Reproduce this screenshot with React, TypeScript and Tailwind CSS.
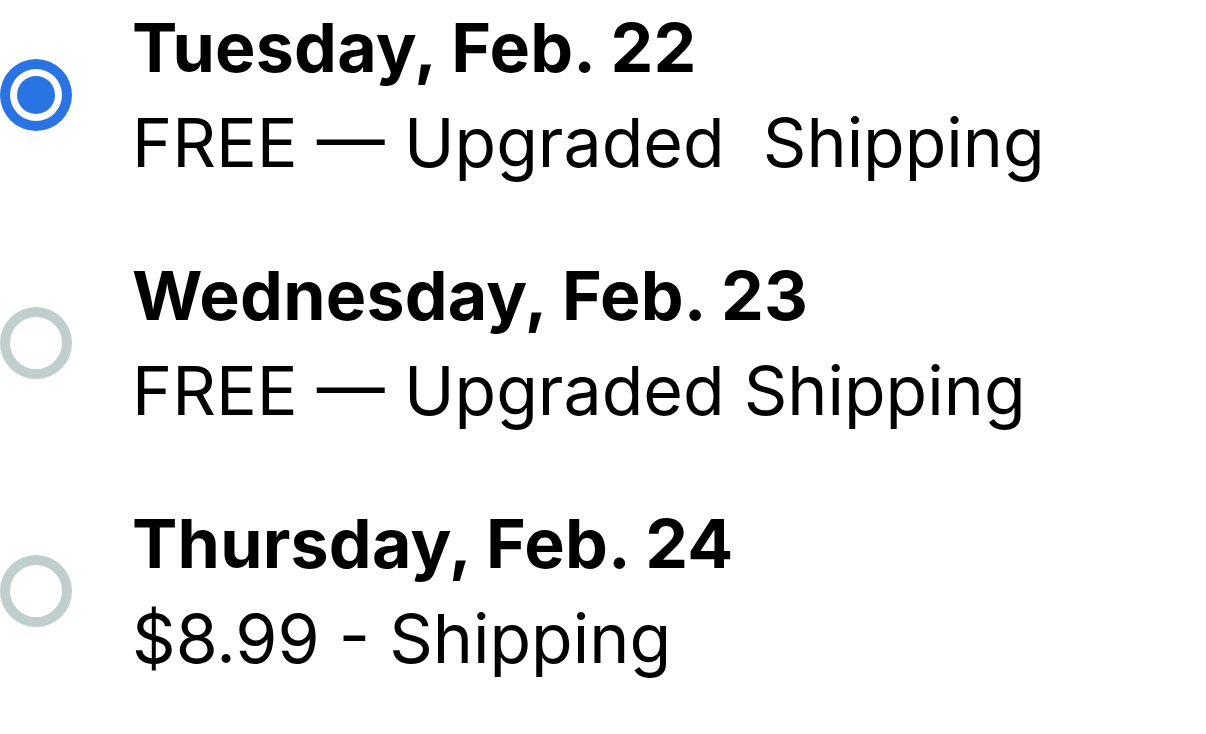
import React, { useState } from 'react';

type Option = {
  id: string;
  day: string;
  price: string;
};

const options: Option[] = [
  { id: 'tue', day: 'Tuesday, Feb. 22', price: 'FREE — Upgraded\u00a0 Shipping' },
  { id: 'wed', day: 'Wednesday, Feb. 23', price: 'FREE — Upgraded Shipping' },
  { id: 'thu', day: 'Thursday, Feb. 24', price: '$8.99 - Shipping' },
];

const App: React.FC = () => {
  const [selected, setSelected] = useState('tue');

  return (
    <div className="min-h-screen bg-white font-['Inter',sans-serif] text-black">
      <div className="flex flex-col gap-[58px]">
        {options.map((opt) => {
          const active = opt.id === selected;
          return (
            <label key={opt.id} className="flex items-center gap-[60px] cursor-pointer" onClick={() => setSelected(opt.id)}>
              {/* Radio */}
              {active ? (
                <span className="flex h-[72px] w-[72px] shrink-0 items-center justify-center rounded-full bg-[#2a73e3]">
                  <span className="flex h-[52px] w-[52px] items-center justify-center rounded-full bg-white">
                    <span className="h-[38px] w-[38px] rounded-full bg-[#2a73e3]"></span>
                  </span>
                </span>
              ) : (
                <span className="h-[72px] w-[72px] shrink-0 rounded-full border-[10px] border-[#c1cece]"></span>
              )}

              <div className="flex flex-col">
                <span className="text-[68px] leading-[95px] font-bold tracking-[0.003em]">{opt.day}</span>
                <span className="text-[68px] leading-[95px] font-normal">{opt.price}</span>
              </div>
            </label>
          );
        })}
      </div>
    </div>
  );
};

export default App;
